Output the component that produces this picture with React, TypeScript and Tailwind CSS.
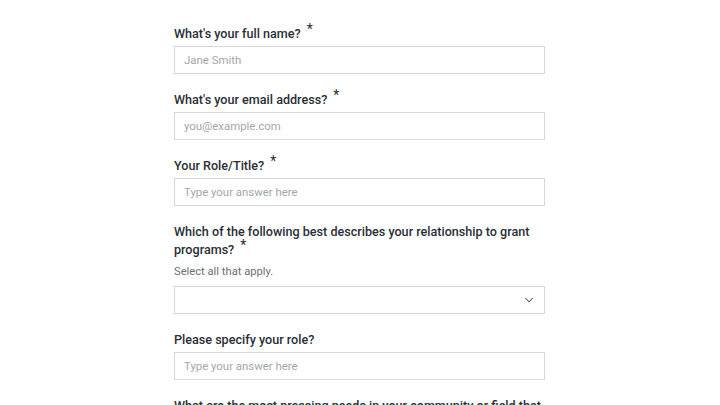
import { ChevronDown } from 'lucide-react';

type Field = {
    label: string;
    required?: boolean;
    placeholder?: string;
    helper?: string;
    select?: boolean;
};

const fields: Field[] = [
    { label: "What's your full name?", required: true, placeholder: 'Jane Smith' },
    { label: "What's your email address?", required: true, placeholder: 'you@example.com' },
    { label: 'Your Role/Title?', required: true, placeholder: 'Type your answer here' },
    {
        label: 'Which of the following best describes your relationship to grant programs?',
        required: true,
        helper: 'Select all that apply.',
        select: true
    },
    { label: 'Please specify your role?', placeholder: 'Type your answer here' },
    { label: 'What are the most pressing needs in your community or field that a grant program could address?', placeholder: 'Type your answer here' }
];

function FormField({ field }: { field: Field }) {
    return (
        <div className="flex flex-col">
            <label className="pt-px text-[12.6px] leading-[18px] font-medium text-[#2a2f36]">
                {field.label}
                {field.required && (
                    <span className="ml-[6px] text-[14px] leading-none font-normal relative -top-[4px]">*</span>
                )}
            </label>
            {field.helper && (
                <div className="mt-[4px] text-[11.2px] leading-[18px] text-[#6b7079]">{field.helper}</div>
            )}
            {field.select ? (
                <div className="mt-[5px] h-[28px] border border-[#d5d7db] bg-white flex items-center justify-end pr-[8px]">
                    <ChevronDown size={14} strokeWidth={1.75} className="text-[#4b5058]" />
                </div>
            ) : (
                <input
                    className="mt-[3px] h-[28px] border border-[#d5d7db] bg-white px-[9px] text-[11.4px] text-[#2a2f36] placeholder:text-[#a3a7ad] outline-none"
                    placeholder={field.placeholder}
                />
            )}
        </div>
    );
}

export default function App() {
    return (
        <div
            className="w-[720px] h-[405px] overflow-hidden bg-white"
            style={{ fontFamily: 'Roboto, "Noto Sans", sans-serif' }}
        >
            <div className="w-[371px] ml-[174px] pt-[24px] flex flex-col gap-4">
                {fields.map((f) => (
                    <FormField key={f.label} field={f} />
                ))}
            </div>
        </div>
    );
}
